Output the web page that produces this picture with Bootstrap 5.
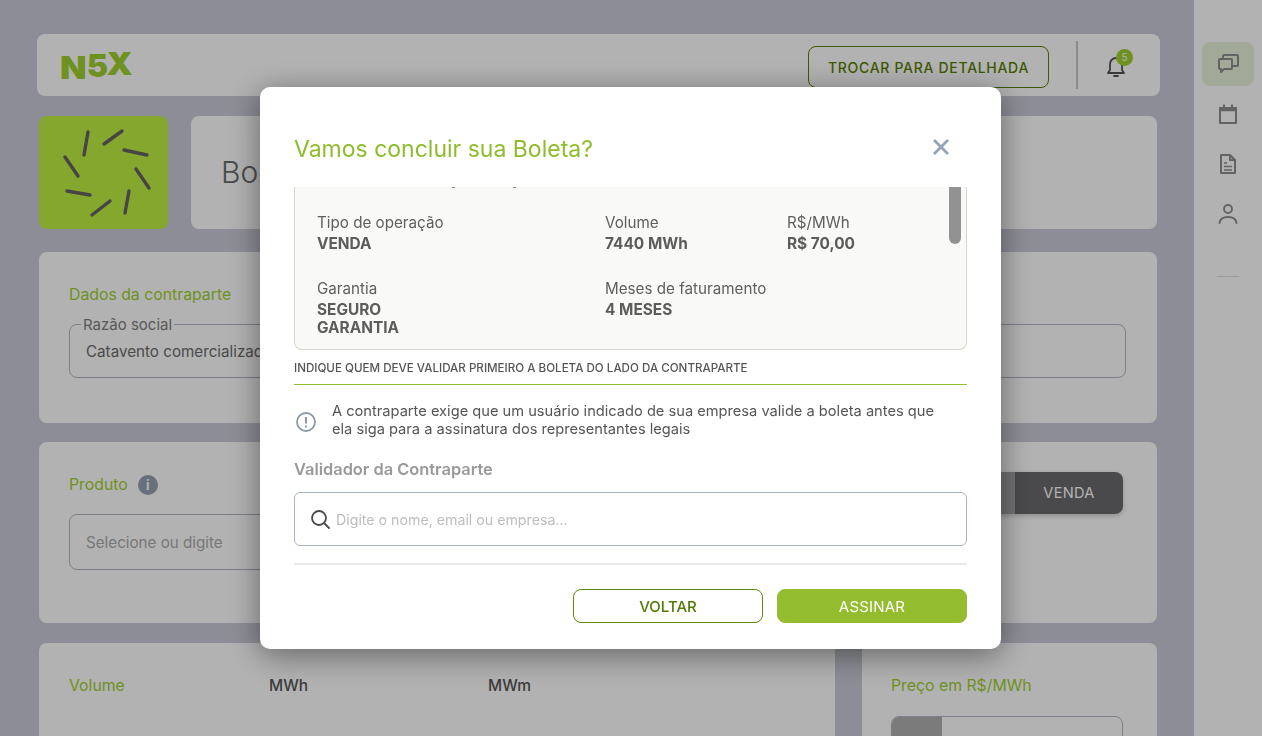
<!DOCTYPE html>
<html lang="pt-BR">
<head>
  <meta charset="UTF-8">
  <meta name="viewport" content="width=device-width, initial-scale=1.0">
  <title>Boleta</title>
  <link href="https://cdn.jsdelivr.net/npm/bootstrap@5.3.3/dist/css/bootstrap.min.css" rel="stylesheet">
  <style>
    html, body { height: 100%; overflow: hidden; }
    body {
      background: #cbcbd8;
      font-family: Inter, "Liberation Sans", sans-serif;
      color: #555;
    }
    .app-shell { height: 736px; overflow: hidden; }
    .app-main { width: 1194px; padding: 34px 37px 0 37px; flex: none; }
    .app-side { width: 68px; background: #fff; padding: 42px 8px 0 8px; flex: none; }
    .side-item { height: 44px; border-radius: 8px; margin-bottom: 6px; }
    .side-item.is-on { background: #eaf3dc; }
    .side-rule { width: 22px; height: 1px; background: #e0e0e0; margin: 40px auto 0 auto; }
    .panel { background: #fff; border-radius: 8px; }
    .top-bar { height: 62px; padding: 0 26px 0 23px; margin-right: -3px; margin-bottom: 20px; }
    .brand { font-weight: 900; font-size: 32px; color: #9fd02e; line-height: 1; margin-top: 5px; white-space: nowrap; }
    .brand span { display: inline-block; }
    .brand .b-n { transform: scaleX(1.08); transform-origin: left; }
    .brand .b-5 { transform: translate(2px, -2px); }
    .brand .b-x { transform: translate(1px, -4px) scaleX(1.04); }
    .btn-swap {
      width: 241px; height: 42px; border: 1px solid #578000; border-radius: 8px; margin-top: 4px;
      color: #578000; font-size: 14px; font-weight: 500; letter-spacing: .7px; padding: 0;
    }
    .top-rule { width: 2px; height: 48px; background: #c8c8c8; margin: 0 27px 0 27px; }
    .bell-wrap { position: relative; width: 24px; height: 24px; margin-right: 5px; }
    .bell-count {
      position: absolute; top: -4px; left: 11px; width: 17px; height: 17px; border-radius: 50%;
      background: #9fd02e; color: #fff; font-size: 10px; line-height: 17px; text-align: center;
    }
    .rows { margin-left: 2px; width: 1118px; }
    .tile { width: 129px; height: 113px; border-radius: 8px; background: #c0f042; flex: none; }
    .title-panel { height: 113px; margin-left: 23px; flex: 1; padding-left: 30px; font-size: 30px; font-weight: 300; color: #6b6b6b; }
    .head-row { margin-bottom: 23px; }
    .data-panel { height: 171px; padding: 33px 31px 0 30px; margin-bottom: 19px; }
    .sec-label { color: #9fd02e; font-size: 15.8px; font-weight: 400; line-height: 20px; }
    .field-set { border: 1px solid #b0b8c4; border-radius: 8px; height: 61px; margin-top: 12px; padding: 0 16px; }
    .field-set legend { float: none; width: auto; font-size: 15px; line-height: 1; margin: 0 0 0 -5px; padding: 0 2px; color: #808080; }
    .field-set div { font-size: 15.2px; line-height: 20px; color: #6b6b6b; padding-top: 10px; white-space: nowrap; }
    .prod-panel { height: 181px; padding: 33px 34px 0 30px; margin-bottom: 20px; }
    .info-dot { width: 20px; height: 20px; border-radius: 50%; background: #96a2b1; color: #fff; font-size: 13px; font-weight: 700; line-height: 20px; text-align: center; margin-left: 10px; }
    .prod-input { width: 500px; height: 56px; border: 1px solid #b0b8c4; border-radius: 8px; margin-top: 19px; padding: 18px 16px; font-size: 15.2px; line-height: 20px; color: #ababab; }
    .side-toggle { height: 42px; width: 300px; margin-top: -3px; border-radius: 8px; overflow: hidden; box-shadow: 0 2px 5px rgba(0,0,0,.2); }
    .side-toggle span { flex: 1; text-align: center; line-height: 42px; font-size: 14.6px; letter-spacing: .3px; }
    .t-off { background: #a3a3a3; color: #fff; }
    .t-on { background: #6a6a6d; color: #fff; flex: none !important; width: 108px; }
    .vol-panel { width: 796px; height: 200px; padding: 33px 30px; flex: none; }
    .unit { font-size: 15.5px; font-weight: 500; line-height: 20px; color: #555; }
    .vol-a { width: 200px; }
    .vol-b { width: 219px; }
    .price-panel { flex: 1; margin-left: 27px; height: 200px; padding: 33px 34px 0 29px; }
    .price-input { height: 60px; margin-top: 20px; border: 1px solid #b0b8c4; border-radius: 8px; overflow: hidden; }
    .price-input i { display: block; width: 50px; height: 100%; background: #b1b1b1; }

    .modal-backdrop.show { opacity: .3; }
    .deal-dialog { max-width: 741px; width: 741px; margin: 87px 0 0 260px; }
    .deal-box { border: 0; border-radius: 10px; height: 562px; box-shadow: 0 6px 32px rgba(0,0,0,.45); }
    .deal-head { height: 100px; padding: 21px 26px 0 34px; }
    .deal-title { color: #8fbc2d; font-size: 23px; font-weight: 400; line-height: 30px; margin: 26px 0 0 0; }
    .deal-close { background: none; border: 0; padding: 0; width: 18px; height: 18px; margin: 30px 25px 0 0; line-height: 0; }
    .deal-body { padding: 0 34px; }
    .sum-box {
      position: relative; height: 163px; overflow: hidden; background: #f9f9f7; padding: 0 22px;
      border: 1px solid #d6d6ca; border-top: 0; border-radius: 0 0 8px 8px;
    }
    .sum-clip { height: 1px; }
    .sum-clip span { position: absolute; top: 0; width: 3px; height: 1px; background: #888; }
    .sum-thumb { position: absolute; top: 0; right: 5px; width: 12px; height: 57px; background: #929292; border-radius: 0 0 6px 6px; }
    .sum-grid { display: grid; grid-template-columns: 288px 182px 1fr; row-gap: 26px; padding-top: 25px; font-size: 15.2px; line-height: 20px; color: #5f5f5f; }
    .sum-grid b { display: block; font-weight: 700; line-height: 18px; margin-top: 2px; font-size: 15.4px; color: #5c5c5c; }
    .sum-grid span { display: block; line-height: 20px; }
    .who-line { font-size: 11.6px; font-weight: 500; line-height: 14px; color: #555; padding: 11px 0 9px 0; border-bottom: 1px solid #92bd2e; white-space: nowrap; }
    .warn-row { padding-top: 17px; font-size: 14.65px; line-height: 18px; color: #555; white-space: nowrap; }
    .warn-row svg { flex: none; margin: 9px 15px 0 1px; }
    .val-label { font-size: 16.4px; font-weight: 600; color: #999; line-height: 20px; margin-top: 21px; }
    .val-input { height: 54px; margin-top: 13px; border: 1px solid #a9b4c2; border-radius: 6px; padding: 0 15px; }
    .val-input span { font-size: 14.2px; color: #bdbdbd; margin: 2px 0 0 6px; }
    .deal-rule { height: 2px; background: #e9e9e9; margin-top: 17px; }
    .deal-foot { padding-top: 24px; }
    .btn-deal { width: 190px; height: 34px; padding: 0; border-radius: 8px; font-size: 15px; font-weight: 500; line-height: 1; }
    .btn-back { border: 1px solid #5c8a0a; color: #4f7a05; background: #fff; }
    .btn-sign { border: 1px solid #93bd2e; background: #93bd2e; color: #fff; margin-left: 14px; font-weight: 400; letter-spacing: .2px; }
  </style>
</head>
<body>
  <div class="app-shell d-flex">
    <div class="app-main">
      <div class="panel top-bar d-flex align-items-center">
        <div class="brand"><span class="b-n">N</span><span class="b-5">5</span><span class="b-x">X</span></div>
        <button class="btn btn-swap ms-auto" type="button">TROCAR PARA DETALHADA</button>
        <div class="top-rule"></div>
        <div class="bell-wrap">
          <svg width="24" height="24" viewBox="1 0 24 24" fill="none" stroke="#535353" stroke-width="1.8" stroke-linecap="round" stroke-linejoin="round">
            <path d="M6 15V9a6 6 0 0 1 12 0v6l2 3H4z"/><path d="M10 21h4"/>
          </svg>
          <span class="bell-count">5</span>
        </div>
      </div>

      <div class="rows">
        <div class="d-flex head-row">
          <div class="tile">
            <svg width="129" height="113" viewBox="0 0 129 113" fill="none" stroke="#636363" stroke-width="3.4" stroke-linecap="round">
              <path d="M49 16 45 39"/><path d="M83 15 65 28"/><path d="M85 34 108 39"/><path d="M97 53 110 72"/>
              <path d="M90 75 86 97"/><path d="M71 85 53 99"/><path d="M51 79 28 75"/><path d="M39 60 26 41"/>
            </svg>
          </div>
          <div class="panel title-panel d-flex align-items-center">Boleta</div>
        </div>

        <div class="panel data-panel">
          <div class="sec-label">Dados da contraparte</div>
          <fieldset class="field-set">
            <legend>Razão social</legend>
            <div>Catavento comercializadora</div>
          </fieldset>
        </div>

        <div class="panel prod-panel">
          <div class="d-flex justify-content-between">
            <div>
              <div class="d-flex align-items-center sec-label">Produto <span class="info-dot">i</span></div>
              <div class="prod-input">Selecione ou digite</div>
            </div>
            <div class="side-toggle d-flex">
              <span class="t-off">COMPRA</span>
              <span class="t-on">VENDA</span>
            </div>
          </div>
        </div>

        <div class="d-flex">
          <div class="panel vol-panel d-flex">
            <div class="sec-label vol-a">Volume</div>
            <div class="unit vol-b">MWh</div>
            <div class="unit">MWm</div>
          </div>
          <div class="panel price-panel">
            <div class="sec-label">Preço em R$/MWh</div>
            <div class="price-input"><i></i></div>
          </div>
        </div>
      </div>
    </div>

    <div class="app-side">
      <div class="side-item is-on d-flex align-items-center justify-content-center">
        <svg width="24" height="24" viewBox="0 0 24 24" fill="none" stroke="#8f8f8f" stroke-width="2" stroke-linejoin="round">
          <path d="M4 7h11a1 1 0 0 1 1 1v8a1 1 0 0 1-1 1H8l-3 3v-3H4a1 1 0 0 1-1-1V8a1 1 0 0 1 1-1z"/>
          <path d="M7 7V4a1 1 0 0 1 1-1h13a1 1 0 0 1 1 1v9a1 1 0 0 1-1 1h-5"/>
        </svg>
      </div>
      <div class="side-item d-flex align-items-center justify-content-center">
        <svg width="24" height="24" viewBox="0 0 24 24" fill="none" stroke="#8f8f8f" stroke-width="2">
          <path d="M4 6h16v15H4z" stroke-linejoin="round"/><path d="M4 8h16" stroke-width="2.500"/><path d="M8 2.500v3M16 2.500v3"/>
        </svg>
      </div>
      <div class="side-item d-flex align-items-center justify-content-center">
        <svg width="24" height="24" viewBox="0 0 24 24" fill="none" stroke="#8f8f8f" stroke-width="2" stroke-linejoin="round">
          <path d="M5 3h9l5 5v13H5z"/><path d="M14 3v5h5"/><path d="M8 11h3M8 14.500h8M8 18h8" stroke-width="1.700"/>
        </svg>
      </div>
      <div class="side-item d-flex align-items-center justify-content-center">
        <svg width="24" height="24" viewBox="0 0 24 24" fill="none" stroke="#8f8f8f" stroke-width="1.900" stroke-linecap="round">
          <circle cx="12" cy="7" r="4"/><path d="M3.500 21c.5-4 4-6 8.500-6s8 2 8.500 6"/>
        </svg>
      </div>
      <div class="side-rule"></div>
    </div>
  </div>

  <div class="modal-backdrop show"></div>
  <div class="modal d-block" tabindex="-1">
    <div class="modal-dialog deal-dialog">
      <div class="modal-content deal-box">
        <div class="deal-head d-flex justify-content-between align-items-start">
          <h5 class="deal-title">Vamos concluir sua Boleta?</h5>
          <button class="deal-close" type="button" aria-label="Fechar">
            <svg width="18" height="18" viewBox="0 0 18 18" fill="none" stroke="#94a3b8" stroke-width="2.800"><path d="M2 2l14 14M16 2 2 16"/></svg>
          </button>
        </div>
        <div class="deal-body">
          <div class="sum-box">
            <div class="sum-clip"><span style="left: 157px"></span><span style="left: 218px"></span></div>
            <div class="sum-thumb"></div>
            <div class="sum-grid">
              <div><span>Tipo de operação</span><b>VENDA</b></div>
              <div><span>Volume</span><b>7440 MWh</b></div>
              <div><span>R$/MWh</span><b>R$ 70,00</b></div>
              <div><span>Garantia</span><b>SEGURO<br>GARANTIA</b></div>
              <div class="text-nowrap"><span>Meses de faturamento</span><b>4 MESES</b></div>
            </div>
          </div>
          <div class="who-line">INDIQUE QUEM DEVE VALIDAR PRIMEIRO A BOLETA DO LADO DA CONTRAPARTE</div>
          <div class="warn-row d-flex">
            <svg width="22" height="22" viewBox="0 0 22 22" fill="none" stroke="#8d98a8" stroke-width="1.800">
              <circle cx="11" cy="11" r="9"/><path d="M11 6v6.500" stroke-width="2"/><path d="M11 14.500v2" stroke-width="2"/>
            </svg>
            <div>A contraparte exige que um usuário indicado de sua empresa valide a boleta antes que<br>ela siga para a assinatura dos representantes legais</div>
          </div>
          <div class="val-label">Validador da Contraparte</div>
          <div class="val-input d-flex align-items-center">
            <svg width="20" height="20" viewBox="0 0 20 20" fill="none" stroke="#4a4a4a" stroke-width="1.800" stroke-linecap="round">
              <circle cx="9" cy="9" r="7"/><path d="M14 14l5 5"/>
            </svg>
            <span>Digite o nome, email ou empresa...</span>
          </div>
          <div class="deal-rule"></div>
          <div class="deal-foot d-flex justify-content-end">
            <button class="btn btn-deal btn-back" type="button">VOLTAR</button>
            <button class="btn btn-deal btn-sign" type="button">ASSINAR</button>
          </div>
        </div>
      </div>
    </div>
  </div>

  <script src="https://cdn.jsdelivr.net/npm/bootstrap@5.3.3/dist/js/bootstrap.bundle.min.js"></script>
</body>
</html>
